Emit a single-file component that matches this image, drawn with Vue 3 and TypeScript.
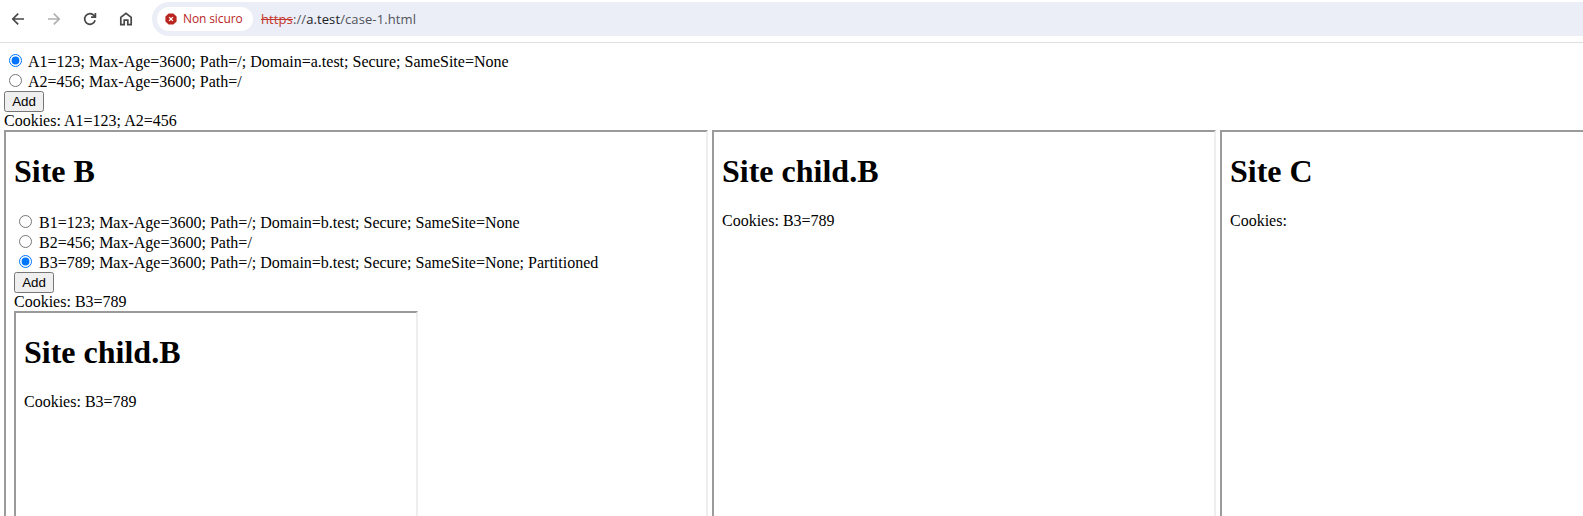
<script setup lang="ts">
import { ref } from 'vue'

const siteA = ref('A1')
const siteB = ref('B3')

const optionsA = [
  { id: 'A1', text: 'A1=123; Max-Age=3600; Path=/; Domain=a.test; Secure; SameSite=None' },
  { id: 'A2', text: 'A2=456; Max-Age=3600; Path=/' },
]
const optionsB = [
  { id: 'B1', text: 'B1=123; Max-Age=3600; Path=/; Domain=b.test; Secure; SameSite=None' },
  { id: 'B2', text: 'B2=456; Max-Age=3600; Path=/' },
  { id: 'B3', text: 'B3=789; Max-Age=3600; Path=/; Domain=b.test; Secure; SameSite=None; Partitioned' },
]
</script>

<template>
  <div class="window">
    <header class="toolbar">
      <nav class="nav">
        <svg class="icon" viewBox="0 0 16 16"><path d="M14 8H3M8.2 2.6L2.8 8l5.4 5.4" /></svg>
        <svg class="icon disabled" viewBox="0 0 16 16"><path d="M2 8h11M7.8 2.6L13.2 8l-5.4 5.4" /></svg>
        <svg class="icon" viewBox="0 0 16 16"><path d="M13.1 9.3A5.3 5.3 0 1 1 12 4.5L13.4 6M13.4 1.9v4.3H9.1" /></svg>
        <svg class="icon" viewBox="0 0 16 16"><path d="M2.8 13.7V6.3L8 2.3l5.2 4v7.4H9.8V9.1H6.2v4.6z" /></svg>
      </nav>
      <div class="omnibox">
        <span class="chip">
          <svg class="warn" viewBox="0 0 12 12">
            <path class="badge" d="M3.6 0.4h4.8l3.2 3.2v4.8l-3.2 3.2H3.6L0.4 8.4V3.6z" />
            <path class="cross" d="M4.1 4.1l3.8 3.8M7.9 4.1L4.1 7.9" />
          </svg>
          <span class="chip-text">Non sicuro</span>
        </span>
        <span class="url"><s class="scheme">https</s><span>://</span><span class="host">a.test</span><span>/case-1.html</span></span>
      </div>
    </header>

    <main class="page">
      <label v-for="o in optionsA" :key="o.id" class="option outer">
        <input v-model="siteA" type="radio" name="site-a" :value="o.id" />
        <span>{{ o.text }}</span>
      </label>
      <button type="button" class="add">Add</button>
      <div class="cookies">Cookies: A1=123; A2=456</div>

      <div class="frames">
        <section class="frame wide">
          <h1>Site B</h1>
          <label v-for="o in optionsB" :key="o.id" class="option">
            <input v-model="siteB" type="radio" name="site-b" :value="o.id" />
            <span>{{ o.text }}</span>
          </label>
          <button type="button" class="add">Add</button>
          <div class="cookies">Cookies: B3=789</div>
          <section class="frame nested">
            <h1>Site child.B</h1>
            <div class="cookies">Cookies: B3=789</div>
          </section>
        </section>
        <section class="frame">
          <h1>Site child.B</h1>
          <div class="cookies">Cookies: B3=789</div>
        </section>
        <section class="frame">
          <h1>Site C</h1>
          <div class="cookies">Cookies:</div>
        </section>
      </div>
    </main>
  </div>
</template>

<style>
body {
  margin: 0;
  overflow: hidden;
}
</style>

<style scoped>
.window {
  box-sizing: border-box;
  width: 100vw;
  height: 100vh;
  overflow: hidden;
  background: #fff;
  color: #000;
  font: 16px/18px "Liberation Serif", serif;
}
.toolbar {
  box-sizing: border-box;
  display: flex;
  height: 43px;
  padding: 2px 0 6px 10px;
  border-bottom: 1px solid #dfdfdf;
  font-family: "Open Sans", sans-serif;
}
.nav {
  display: flex;
  align-items: center;
  gap: 20px;
  width: 142px;
  height: 34px;
}
.icon {
  flex: none;
  width: 16px;
  height: 16px;
  fill: none;
  stroke: #474747;
  stroke-width: 1.7;
}
.disabled {
  stroke: #b0b0b0;
}
.omnibox {
  box-sizing: border-box;
  display: flex;
  flex: 1;
  align-items: center;
  height: 34px;
  padding-left: 5px;
  border-radius: 17px 0 0 17px;
  background: #ebeef7;
}
.chip {
  box-sizing: border-box;
  display: flex;
  align-items: center;
  gap: 6px;
  width: 96px;
  height: 24px;
  padding-left: 8px;
  border-radius: 12px;
  background: #fff;
}
.warn {
  width: 12px;
  height: 12px;
}
.badge {
  fill: #b9261f;
}
.cross {
  fill: none;
  stroke: #fff;
  stroke-width: 1.3;
}
.chip-text {
  color: #b9261f;
  font-size: 12px;
  letter-spacing: -0.12px;
  white-space: nowrap;
}
.url {
  margin-left: 8px;
  color: #50535a;
  font-size: 13px;
  letter-spacing: 0.1px;
  white-space: nowrap;
}
.scheme {
  color: #c5362c;
}
.host {
  color: #202124;
}
.page {
  padding: 8px 4px 0;
}
.option {
  display: flex;
  height: 20px;
  white-space: nowrap;
}
.option input {
  flex: none;
  width: 13px;
  height: 13px;
  margin: 3px 7px 0 5px;
}
.outer input {
  margin-right: 6px;
}
.option span {
  padding-top: 2px;
}
.add {
  display: block;
  width: 40px;
  height: 21px;
  margin: 0;
  padding: 1px 6px;
  font: 13.333px "Liberation Sans", sans-serif;
}
.cookies {
  height: 18px;
}
.frames {
  display: flex;
  gap: 4px;
  width: max-content;
}
.frame {
  box-sizing: border-box;
  width: 504px;
  height: 504px;
  padding: 0 8px;
  border: 2px solid;
  border-color: #9a9a9a #eee #eee #9a9a9a;
}
.wide {
  width: 704px;
}
.nested {
  width: 404px;
}
h1 {
  margin: 21px 0 22px;
  font-size: 32px;
  font-weight: 700;
  line-height: 37px;
}
</style>
